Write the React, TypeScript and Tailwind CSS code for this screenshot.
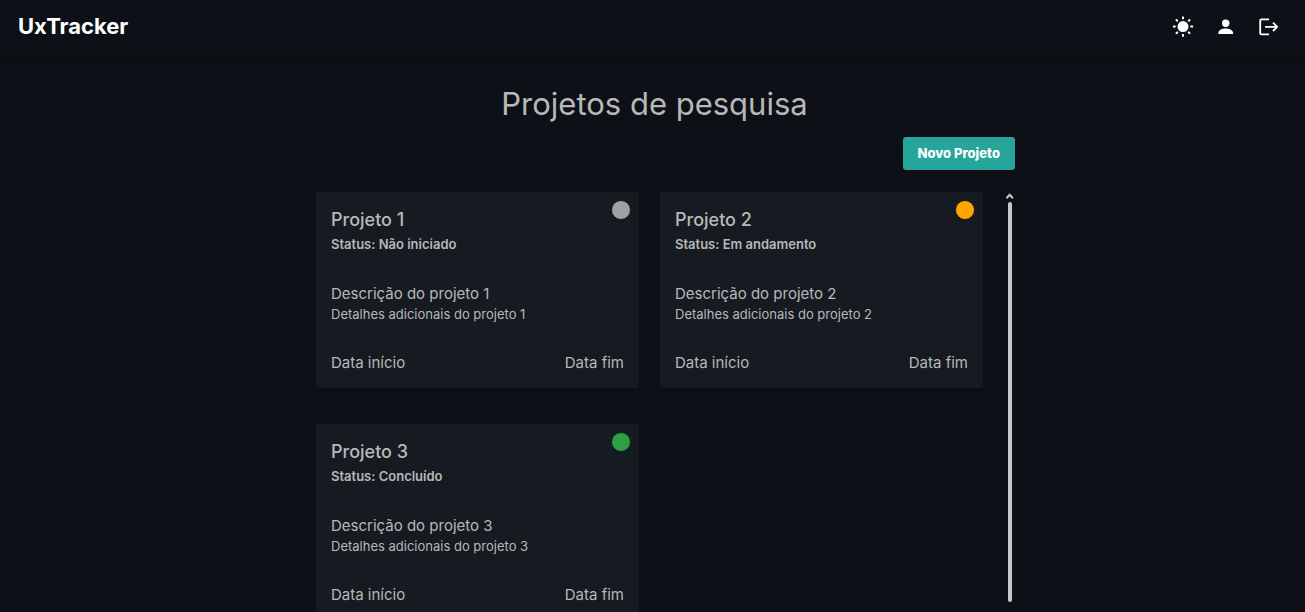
type Project = {
  id: number;
  status: string;
  dot: string;
};

const projects: Project[] = [
  { id: 1, status: "Não iniciado", dot: "bg-[#a1a1a4]" },
  { id: 2, status: "Em andamento", dot: "bg-[#ffa500]" },
  { id: 3, status: "Concluído", dot: "bg-[#2ea043]" },
];

const rayAngles = [0, 45, 90, 135, 180, 225, 270, 315];

function SunIcon() {
  return (
    <svg className="size-6" viewBox="0 0 24 24" fill="currentColor" aria-hidden="true">
      <circle cx="12" cy="11.6" r="5.5" />
      {rayAngles.map((angle) => (
        <rect key={angle} x="11" y="1.5" width="2" height="2.8" rx="0.5" transform={`rotate(${angle} 12 11.6)`} />
      ))}
    </svg>
  );
}

function PersonIcon() {
  return (
    <svg className="size-6" viewBox="0 0 24 24" fill="currentColor" aria-hidden="true">
      <circle cx="11.7" cy="8.2" r="3.7" />
      <path d="M4.3 19v-1c0-3.2 4.3-4.6 7.4-4.6s7.4 1.4 7.4 4.6v1Z" />
    </svg>
  );
}

function LogoutIcon() {
  return (
    <svg
      className="size-6"
      viewBox="0 0 24 24"
      fill="none"
      stroke="currentColor"
      strokeWidth="1.8"
      strokeLinejoin="round"
      aria-hidden="true"
    >
      <path d="M12 4.3H4.6q-1.4 0-1.4 1.4v12.2q0 1.4 1.4 1.4H12" />
      <path d="M8 11.8H20M16 7.6l4.2 4.2-4.2 4.2" />
    </svg>
  );
}

function Header() {
  return (
    <header className="flex h-14 shrink-0 items-start justify-between pl-[18px] pr-6 pt-3 shadow-[0_2px_4px_#101010]">
      <a href="#" className="text-[22px] leading-7 font-bold text-white">
        UxTracker
      </a>
      <nav className="flex items-center gap-[19px] pt-[3px] text-white">
        <button type="button" aria-label="Tema claro">
          <SunIcon />
        </button>
        <button type="button" aria-label="Perfil">
          <PersonIcon />
        </button>
        <button type="button" aria-label="Sair">
          <LogoutIcon />
        </button>
      </nav>
    </header>
  );
}

function ProjectCard({ project }: { project: Project }) {
  return (
    <article className="relative h-49 rounded-[3px] bg-[#161b22] px-[15px] pt-3.5 shadow-[0_2px_2px_rgba(0,0,0,0.25)]">
      <span className={"absolute top-2 right-2 size-5 rounded-full border border-[#161b22] " + project.dot} />
      <h2 className="text-lg leading-7 font-medium">Projeto {project.id}</h2>
      <p className="text-[13px] leading-5 font-semibold">Status: {project.status}</p>
      <p className="mt-7 text-[15px] leading-6">Descrição do projeto {project.id}</p>
      <p className="text-[13px] leading-4">Detalhes adicionais do projeto {project.id}</p>
      <div className="mt-[29px] flex justify-between text-[15px] leading-6">
        <span>Data início</span>
        <span>Data fim</span>
      </div>
    </article>
  );
}

export default function App() {
  return (
    <div className="flex h-screen flex-col overflow-hidden bg-[#0d1117] font-['Inter',sans-serif] text-[#b8b8b8]">
      <Header />
      <main className="mx-auto flex min-h-0 w-full max-w-[725px] flex-1 flex-col pt-7">
        <h1 className="pl-1 text-center text-[31px] leading-10">Projetos de pesquisa</h1>
        <button
          type="button"
          className="mt-[13px] h-[33px] shrink-0 self-end rounded-[3px] bg-[#26a69a] px-[15px] text-[13px] font-extrabold text-white shadow-[0_2px_2px_rgba(0,0,0,0.25)]"
        >
          Novo Projeto
        </button>
        <div className="mt-[22px] flex min-h-0 flex-1 pl-[26px]">
          <div className="grid flex-1 grid-cols-2 content-start gap-x-[21px] gap-y-9 overflow-y-auto [scrollbar-width:none]">
            {projects.map((project) => (
              <ProjectCard key={project.id} project={project} />
            ))}
          </div>
          <div aria-hidden="true" className="ml-[22px] flex w-2.5 flex-col items-center pb-2.5">
            <svg className="h-2.5 w-2.5 shrink-0" viewBox="0 0 10 10" fill="none" stroke="#c8c8c8" strokeWidth="2">
              <path d="M1.5 6.2 4.7 2.8 7.9 6.2" />
            </svg>
            <div className="w-1 flex-1 rounded-sm bg-[#c8c8c8]" />
          </div>
        </div>
      </main>
    </div>
  );
}
